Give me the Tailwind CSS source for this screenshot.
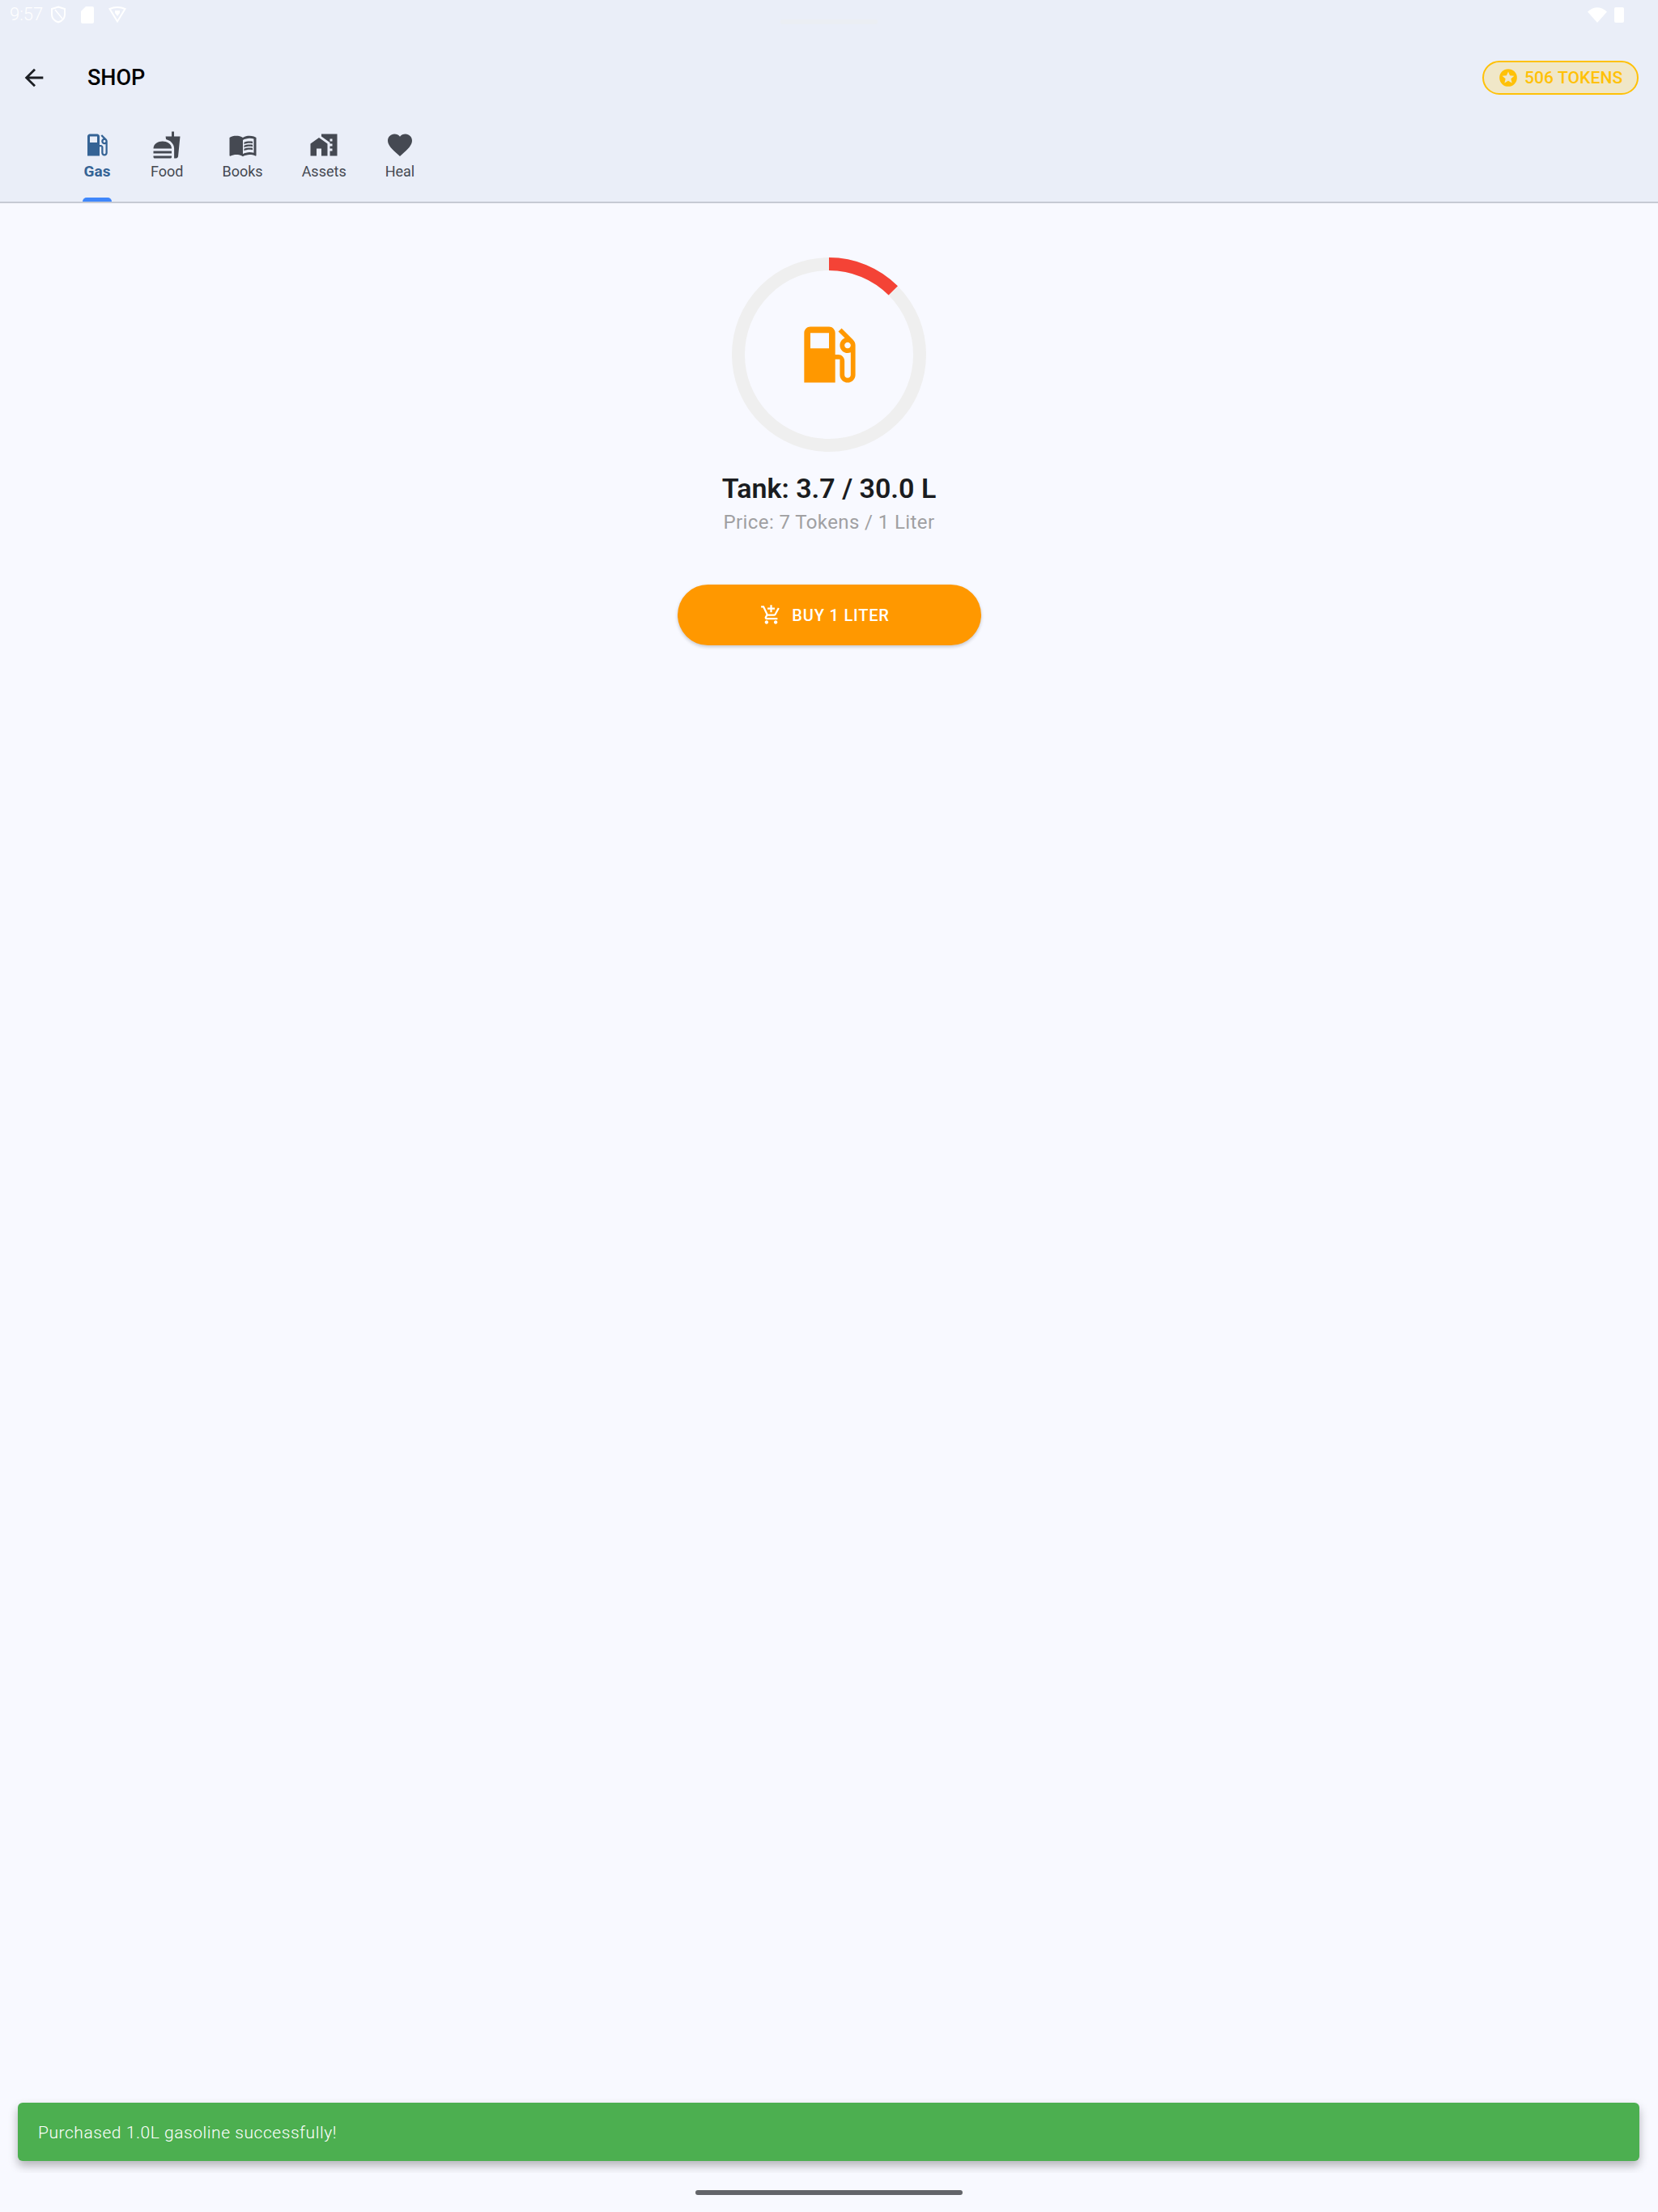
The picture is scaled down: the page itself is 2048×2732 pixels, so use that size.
<!DOCTYPE html>
<html lang="en">
<head>
  <meta charset="UTF-8" />
  <meta name="viewport" content="width=device-width, initial-scale=1.0" />
  <title>Shop</title>
  <script src="https://cdn.jsdelivr.net/npm/@tailwindcss/browser@4"></script>
</head>
<body class="bg-[#f8f9ff] font-['Roboto',sans-serif]">
  <div class="relative w-[2048px] h-[2732px] overflow-hidden flex flex-col">

    <header class="relative bg-[#eaeef8] h-[251px] border-b-2 border-[#c6cad4] shrink-0 flex flex-col">
      <!-- status bar -->
      <div class="h-[36px] flex items-center justify-between pl-[12px] pr-[42px] text-white">
        <div class="flex items-center">
          <span class="text-[22px] font-light leading-none">9:57</span>
          <svg class="w-[20px] h-[22px] ml-[9px]" viewBox="0 0 20 22" fill="none" stroke="currentColor" stroke-width="2"><path d="M10 1.500 18 4v7c0 5-3.500 8-8 9.500C5.500 19 2 16 2 11V4z"/><path d="M6 5l9 11" stroke-width="1.500"/></svg>
          <svg class="w-[16px] h-[21px] ml-[18px]" viewBox="0 0 16 21" fill="currentColor"><path d="M6 0h8a2 2 0 0 1 2 2v17a2 2 0 0 1-2 2H2a2 2 0 0 1-2-2V6z"/></svg>
          <svg class="w-[22px] h-[20px] ml-[18px]" viewBox="0 0 22 20" fill="none" stroke="currentColor" stroke-width="2"><path d="M1.500 3Q11-1 20.500 3L11 18.500z"/><path d="M8 5h6v3l-3 4-3-4z" fill="currentColor" stroke="none"/></svg>
        </div>
        <div class="flex items-center gap-[9px]">
          <svg class="w-[24px] h-[20px]" viewBox="0 0 24 20" fill="currentColor"><path d="M0 6.500Q12-4 24 6.500L12 20z"/></svg>
          <div class="w-[12px] h-[19px] bg-white rounded-[2px]"></div>
        </div>
      </div>
      <div class="absolute left-[964px] top-[24px] w-[120px] h-[6px] rounded-full bg-[#ebeef3]"></div>

      <!-- toolbar -->
      <div class="h-[84px] mt-[18px] -mb-[12px] flex items-center justify-between pl-[25px] pr-[24px]">
        <div class="flex items-center">
          <svg class="w-[34px] h-[34px] text-[#1c1f24]" viewBox="0 0 24 24" fill="currentColor"><path d="M20 11H7.830l5.590-5.590L12 4l-8 8 8 8 1.410-1.410L7.830 13H20v-2z"/></svg>
          <h1 class="ml-[49px] text-[27px] font-medium text-black leading-none">SHOP</h1>
        </div>
        <div class="h-[42px] w-[193px] rounded-full border-2 border-[#ffc107] bg-[#f0e7c8] flex items-center pl-[17px] gap-[7px]">
          <svg class="w-[26px] h-[26px] text-[#ffc107]" viewBox="0 0 24 24" fill="currentColor"><path d="M12 2a10 10 0 1 0 0 20 10 10 0 0 0 0-20zm4.240 16L12 15.450 7.770 18l1.120-4.810-3.730-3.230 4.920-.42L12 5l1.920 4.530 4.920.42-3.730 3.230L16.230 18z"/></svg>
          <span class="text-[21px] font-medium text-[#ffc107] leading-none tracking-[0.1px]">506 TOKENS</span>
        </div>
      </div>

      <!-- tabs -->
      <nav class="flex-1 flex items-start pl-[78px]">
        <div class="relative h-full pt-[35px] px-[24px] flex flex-col items-center text-[#356395]">
          <svg class="w-[36px] h-[36px]" viewBox="0 0 24 24" fill="currentColor"><path d="M19.770 7.230l.01-.01-3.720-3.720L15 4.560l2.110 2.110c-.94.36-1.610 1.260-1.610 2.330 0 1.380 1.120 2.500 2.500 2.500.36 0 .69-.08 1-.21v7.210c0 .55-.45 1-1 1s-1-.45-1-1V14c0-1.100-.9-2-2-2h-1V5c0-1.100-.9-2-2-2H6c-1.100 0-2 .9-2 2v16h10v-7.500h1.500v5c0 1.380 1.120 2.500 2.500 2.500s2.500-1.120 2.500-2.500V9c0-.69-.28-1.320-.73-1.770zM12 10H6V5h6v5zm6 0c-.55 0-1-.45-1-1s.45-1 1-1 1 .45 1 1-.45 1-1 1z"/></svg>
          <span class="text-[19px] font-bold leading-[18px] mt-[6px]">Gas</span>
          <div class="absolute left-[24px] right-[24px] bottom-0 h-[5px] bg-[#3f86fb] rounded-t-[5px]"></div>
        </div>
        <div class="pt-[35px] px-[24px] flex flex-col items-center text-[#454952]">
          <svg class="w-[36px] h-[36px]" viewBox="0 0 24 24" fill="currentColor"><path d="M18.060 22.990h1.660c.84 0 1.530-.64 1.630-1.460L23 5.050h-5V1h-1.970v4.050h-4.970l.3 2.340c1.710.47 3.310 1.320 4.270 2.260 1.440 1.420 2.430 2.890 2.430 5.290v8.050zM1 21.990V21h15.030v.99c0 .55-.45 1.010-1.010 1.010H2.010C1.450 23 1 22.540 1 21.990zM16.030 15C16.030 11 12 9 8.500 9S1 11 1 15h15.030zM1 17h15v2H1z"/></svg>
          <span class="text-[18px] leading-none mt-[6px]">Food</span>
        </div>
        <div class="pt-[35px] px-[24px] flex flex-col items-center text-[#454952]">
          <svg class="w-[36px] h-[36px]" viewBox="0 0 24 24" fill="currentColor"><path d="M21 5c-1.110-.35-2.330-.5-3.500-.5-1.950 0-4.050.4-5.500 1.500-1.450-1.100-3.550-1.500-5.500-1.500S2.450 4.900 1 6v14.650c0 .25.25.5.5.5.1 0 .15-.05.25-.05C3.100 20.450 5.050 20 6.500 20c1.950 0 4.050.4 5.500 1.500 1.350-.85 3.800-1.500 5.500-1.500 1.650 0 3.350.3 4.750 1.050.1.05.15.05.25.05.25 0 .5-.25.5-.5V6c-.6-.45-1.250-.75-2-1zm0 13.500c-1.100-.35-2.300-.5-3.500-.5-1.700 0-4.150.65-5.500 1.500V8c1.350-.85 3.800-1.500 5.500-1.500 1.200 0 2.400.15 3.500.5v11.500z"/><path d="M17.500 10.500c.88 0 1.730.09 2.500.26V9.240c-.79-.15-1.640-.24-2.500-.24-1.700 0-3.240.29-4.500.83v1.660c1.130-.64 2.700-.99 4.500-.99zM13 12.490v1.660c1.130-.64 2.700-.99 4.500-.99.88 0 1.730.09 2.500.26V11.900c-.79-.15-1.640-.24-2.500-.24-1.700 0-3.240.3-4.500.83zM17.500 14.330c-1.700 0-3.240.29-4.500.83v1.660c1.130-.64 2.700-.99 4.500-.99.88 0 1.730.09 2.500.26v-1.520c-.79-.16-1.640-.24-2.500-.24z"/></svg>
          <span class="text-[18px] leading-none mt-[6px]">Books</span>
        </div>
        <div class="pt-[35px] px-[24px] flex flex-col items-center text-[#454952]">
          <svg class="w-[36px] h-[36px]" viewBox="0 0 24 24" fill="currentColor"><path d="M1 11v10h5v-6h4v6h5V11L8 6z"/><path d="M10 3v1.970l7 5V11h2v2h-2v2h2v2h-2v4h6V3H10zm9 6h-2V7h2v2z"/></svg>
          <span class="text-[18px] leading-none mt-[6px]">Assets</span>
        </div>
        <div class="pt-[35px] px-[24px] flex flex-col items-center text-[#454952]">
          <svg class="w-[36px] h-[36px]" viewBox="0 0 24 24" fill="currentColor"><path d="M12 21.350l-1.450-1.320C5.400 15.360 2 12.280 2 8.500 2 5.420 4.420 3 7.500 3c1.740 0 3.410.81 4.500 2.090C13.090 3.810 14.760 3 16.500 3 19.580 3 22 5.420 22 8.500c0 3.780-3.400 6.860-8.550 11.540L12 21.350z"/></svg>
          <span class="text-[18px] leading-none mt-[6px]">Heal</span>
        </div>
      </nav>
    </header>

    <main class="flex-1 flex flex-col items-center pt-[67px]">
      <div class="relative w-[240px] h-[240px] flex items-center justify-center">
        <svg class="absolute inset-0 w-[240px] h-[240px] -rotate-90" viewBox="0 0 240 240" fill="none" stroke-width="16">
          <circle cx="120" cy="120" r="112" stroke="#efefef"/>
          <circle cx="120" cy="120" r="112" stroke="#f44336" stroke-dasharray="88 620"/>
        </svg>
        <svg class="w-[92px] h-[92px] text-[#ff9800]" viewBox="0 0 24 24" fill="currentColor"><path d="M19.770 7.230l.01-.01-3.720-3.720L15 4.560l2.110 2.110c-.94.36-1.610 1.260-1.610 2.330 0 1.380 1.120 2.500 2.500 2.500.36 0 .69-.08 1-.21v7.210c0 .55-.45 1-1 1s-1-.45-1-1V14c0-1.100-.9-2-2-2h-1V5c0-1.100-.9-2-2-2H6c-1.100 0-2 .9-2 2v16h10v-7.500h1.500v5c0 1.380 1.120 2.500 2.500 2.500s2.500-1.120 2.500-2.500V9c0-.69-.28-1.320-.73-1.770zM12 10H6V5h6v5zm6 0c-.55 0-1-.45-1-1s.45-1 1-1 1 .45 1 1-.45 1-1 1z"/></svg>
      </div>
      <h2 class="mt-[24px] text-[34px] font-semibold text-[#1a1c20] leading-[42px]">Tank: 3.7 / 30.0 L</h2>
      <p class="mt-[3px] text-[24px] text-[#a0a0a2] leading-[36px] tracking-[0.4px]">Price: 7 Tokens / 1 Liter</p>
      <button class="mt-[59px] w-[375px] h-[75px] pr-[10px] rounded-full bg-[#ff9800] text-white flex items-center justify-center gap-[12px] shadow-[0_2px_4px_rgba(0,0,0,0.2)]">
        <svg class="w-[27px] h-[27px]" viewBox="0 0 24 24" fill="currentColor"><path d="M11 9h2V6h3V4h-3V1h-2v3H8v2h3v3zm-4 9c-1.100 0-1.990.9-1.990 2S5.900 22 7 22s2-.9 2-2-.9-2-2-2zm10 0c-1.100 0-1.990.9-1.990 2s.89 2 1.990 2 2-.9 2-2-.9-2-2-2zm-9.830-3.250l.03-.12.9-1.630h7.450c.75 0 1.410-.41 1.750-1.030l3.860-7.010L19.420 4h-.01l-1.100 2-2.760 5H8.530l-.13-.27L6.160 6l-.95-2-.94-2H1v2h2l3.600 7.590-1.350 2.450c-.16.28-.25.61-.25.96 0 1.100.9 2 2 2h12v-2H7.420c-.13 0-.25-.11-.25-.25z"/></svg>
        <span class="text-[20px] font-medium leading-none tracking-[0.8px]">BUY 1 LITER</span>
      </button>
    </main>

    <!-- snackbar, its shadow is cut off at the bottom like in the app -->
    <div class="absolute left-0 right-0 top-[2570px] h-[114px] overflow-hidden px-[22px] pt-[27px]">
      <div class="h-[72px] w-[2003px] rounded-[6px] bg-[#4caf50] flex items-center pl-[25px] shadow-[0_6px_12px_rgba(0,0,0,0.28)]">
        <span class="text-[21px] font-light text-white tracking-[0.55px] translate-y-[2px]">Purchased 1.0L gasoline successfully!</span>
      </div>
    </div>

    <div class="absolute left-[859px] top-[2705px] w-[330px] h-[6px] rounded-full bg-[#63656a]"></div>
  </div>
</body>
</html>
